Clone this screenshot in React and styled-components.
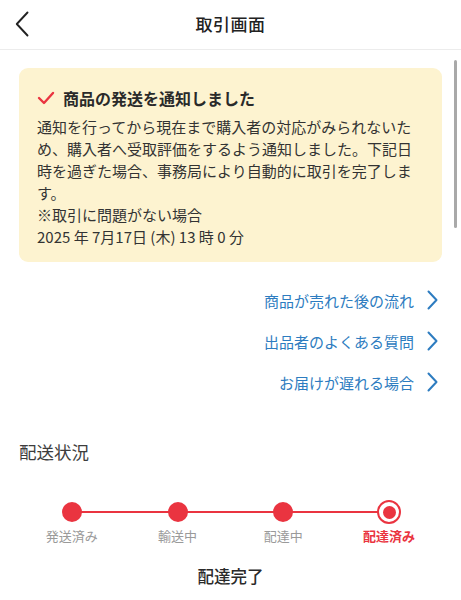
import React from "react";
import styled, { createGlobalStyle } from "styled-components";

const GlobalStyle = createGlobalStyle`
  html, body {
    margin: 0;
    padding: 0;
    background: #ffffff;
  }
  body {
    font-family: "Noto Sans CJK JP", "Noto Sans", sans-serif;
    color: #333333;
  }
`;

const RED = "#ea3440";
const BLUE = "#2d7cc0";

const Page = styled.div`
  position: relative;
  width: 461px;
  height: 600px;
  overflow: hidden;
  background: #ffffff;
`;

const Header = styled.header`
  position: relative;
  height: 49px;
  border-bottom: 1px solid #ececec;
  display: flex;
  align-items: center;
  justify-content: center;
`;

const BackButton = styled.button`
  position: absolute;
  left: 12px;
  top: 10px;
  width: 20px;
  height: 28px;
  padding: 0;
  border: none;
  background: none;
  display: flex;
  align-items: center;
  justify-content: center;
`;

const HeaderTitle = styled.h1`
  margin: 0 0 2px 0;
  font-size: 17px;
  font-weight: 500;
  color: #222222;
  letter-spacing: 0.5px;
`;

const ScrollThumb = styled.div`
  position: absolute;
  right: 4px;
  top: 60px;
  width: 3px;
  height: 168px;
  border-radius: 2px;
  background: #a9a9a9;
`;

const Content = styled.main`
  padding: 18px 19px 0 19px;
`;

const Notice = styled.section`
  background: #fdf3d0;
  border-radius: 9px;
  padding: 19px 18px 14px 18px;
`;

const NoticeTitle = styled.div`
  display: flex;
  align-items: center;
  gap: 8px;
  font-size: 16px;
  font-weight: 700;
  color: #2a2a2a;
  line-height: 22px;
  margin-bottom: 7px;
`;

const NoticeBody = styled.p`
  margin: 0;
  font-size: 15px;
  line-height: 22px;
  color: #333333;
`;

const Links = styled.nav`
  margin-top: 26px;
  display: flex;
  flex-direction: column;
  align-items: flex-end;
  gap: 17px;
`;

const LinkRow = styled.a`
  display: flex;
  align-items: center;
  gap: 13px;
  height: 24px;
  font-size: 15px;
  color: ${BLUE};
  text-decoration: none;
  padding-right: 4px;
`;

const SectionTitle = styled.h2`
  margin: 46px 0 0 0;
  font-size: 17.5px;
  font-weight: 400;
  color: #3d3d3d;
  line-height: 24px;
`;

const Steps = styled.ol`
  list-style: none;
  margin: 36px 0 0 0;
  padding: 0;
  display: grid;
  grid-template-columns: repeat(4, 1fr);
`;

const Step = styled.li`
  position: relative;
  display: flex;
  flex-direction: column;
  align-items: center;

  &::before {
    content: "";
    position: absolute;
    top: 11px;
    height: 2px;
    background: ${RED};
    left: ${({ $first }) => ($first ? "50%" : "0")};
    right: ${({ $last }) => ($last ? "50%" : "0")};
  }
`;

const Dot = styled.span`
  position: relative;
  z-index: 1;
  width: 24px;
  height: 24px;
  display: flex;
  align-items: center;
  justify-content: center;

  &::after {
    content: "";
    width: 20px;
    height: 20px;
    border-radius: 50%;
    background: ${RED};
  }
`;

const CurrentDot = styled.span`
  position: relative;
  z-index: 1;
  width: 24px;
  height: 24px;
  box-sizing: border-box;
  border-radius: 50%;
  border: 2px solid ${RED};
  background: #ffffff;
  display: flex;
  align-items: center;
  justify-content: center;

  &::after {
    content: "";
    width: 13px;
    height: 13px;
    border-radius: 50%;
    background: ${RED};
  }
`;

const StepLabel = styled.span`
  margin-top: 2px;
  font-size: 13px;
  line-height: 20px;
  color: ${({ $current }) => ($current ? RED : "#9a9a9a")};
  font-weight: ${({ $current }) => ($current ? 700 : 400)};
`;

const Status = styled.div`
  margin-top: 18px;
  text-align: center;
  font-size: 16.5px;
  font-weight: 500;
  color: #2a2a2a;
`;

function BackIcon() {
  return (
    <svg width="14" height="26" viewBox="0 0 14 26" fill="none">
      <path d="M12.5 1.5 L1.8 13 L12.5 24.5" stroke="#222222" strokeWidth="1.9" strokeLinecap="round" strokeLinejoin="round" />
    </svg>
  );
}

function LinkChevron() {
  return (
    <svg width="11" height="20" viewBox="0 0 11 20" fill="none">
      <path d="M1.5 1.5 L9.5 10 L1.5 18.5" stroke={BLUE} strokeWidth="2" strokeLinecap="round" strokeLinejoin="round" />
    </svg>
  );
}

function Check() {
  return (
    <svg width="18" height="14" viewBox="0 0 18 14" fill="none">
      <path d="M2 7 L7 12 L16 2" stroke={RED} strokeWidth="2.4" strokeLinecap="round" strokeLinejoin="round" />
    </svg>
  );
}

const links = ["商品が売れた後の流れ", "出品者のよくある質問", "お届けが遅れる場合"];
const steps = ["発送済み", "輸送中", "配達中", "配達済み"];

export default function App() {
  return (
    <>
      <GlobalStyle />
      <Page>
        <Header>
          <BackButton aria-label="戻る">
            <BackIcon />
          </BackButton>
          <HeaderTitle>取引画面</HeaderTitle>
        </Header>
        <ScrollThumb />
        <Content>
          <Notice>
            <NoticeTitle>
              <Check />
              商品の発送を通知しました
            </NoticeTitle>
            <NoticeBody>
              通知を行ってから現在まで購入者の対応がみられないため、購入者へ受取評価をするよう通知しました。下記日時を過ぎた場合、事務局により自動的に取引を完了します。
              <br />
              ※取引に問題がない場合
              <br />
              2025 年 7月17日 (木) 13 時 0 分
            </NoticeBody>
          </Notice>

          <Links>
            {links.map((l) => (
              <LinkRow key={l} href="#">
                {l}
                <LinkChevron />
              </LinkRow>
            ))}
          </Links>

          <SectionTitle>配送状況</SectionTitle>
          <Steps>
            {steps.map((s, i) => {
              const last = i === steps.length - 1;
              return (
                <Step key={s} $first={i === 0} $last={last}>
                  {last ? <CurrentDot /> : <Dot />}
                  <StepLabel $current={last}>{s}</StepLabel>
                </Step>
              );
            })}
          </Steps>
          <Status>配達完了</Status>
        </Content>
      </Page>
    </>
  );
}
